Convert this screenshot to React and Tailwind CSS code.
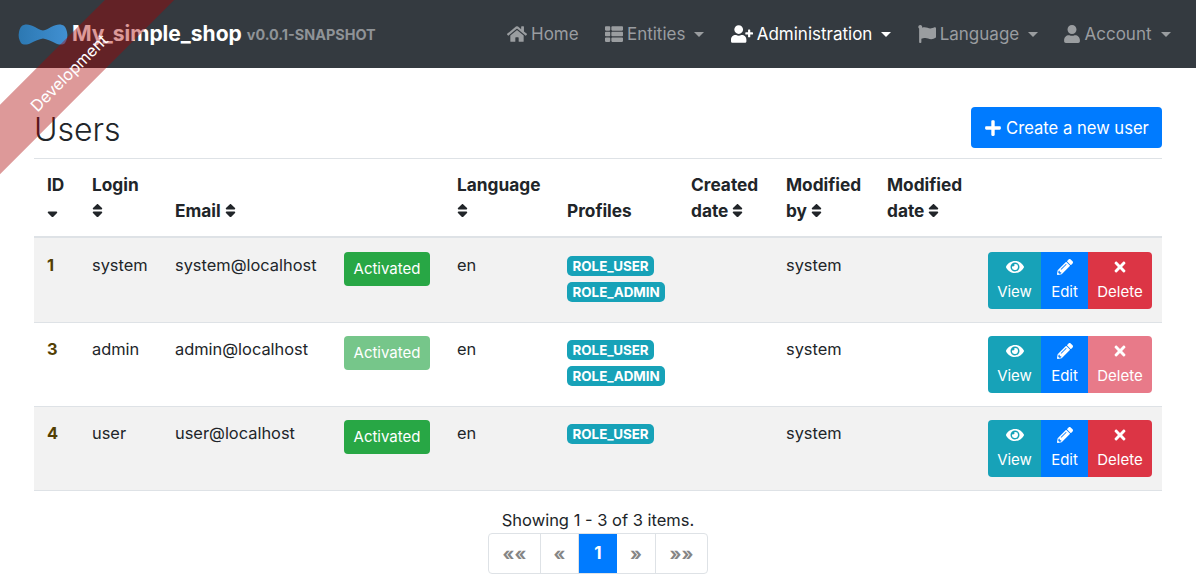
import { FaHome, FaThList, FaUserPlus, FaFlag, FaUser, FaPlus, FaEye, FaPencilAlt, FaTimes, FaSort, FaSortDown } from 'react-icons/fa';

const NAV_ITEMS = [
  { label: 'Home', icon: FaHome, size: 'w-5 h-[18px]', caret: false },
  { label: 'Entities', icon: FaThList, size: 'w-[18px] h-[18px]', caret: true },
  { label: 'Administration', icon: FaUserPlus, size: 'w-[22px] h-[18px]', caret: true, active: true },
  { label: 'Language', icon: FaFlag, size: 'w-[18px] h-[18px]', caret: true },
  { label: 'Account', icon: FaUser, size: 'w-4 h-[18px]', caret: true },
];

const USERS = [
  { id: 1, login: 'system', email: 'system@localhost', roles: ['ROLE_USER', 'ROLE_ADMIN'], self: false },
  { id: 3, login: 'admin', email: 'admin@localhost', roles: ['ROLE_USER', 'ROLE_ADMIN'], self: true },
  { id: 4, login: 'user', email: 'user@localhost', roles: ['ROLE_USER'], self: false },
];

function Caret({ className }) {
  return <span className={`inline-block w-0 h-0 border-x-[5.5px] border-x-transparent border-t-[5.5px] ${className}`} />;
}

function Navbar() {
  return (
    <nav className="h-[68px] bg-[#343a40] flex items-center justify-between pl-[18px] pr-[25.5px]">
      <div className="flex items-center">
        <svg width="50" height="21" viewBox="0 0 50 21" className="mr-1">
          <defs>
            <linearGradient id="tie" x1="0" x2="1" y1="0" y2="0">
              <stop offset="0" stopColor="#2c78b2" />
              <stop offset="1" stopColor="#4190d2" />
            </linearGradient>
          </defs>
          <path d="M6 1 C9 0 13 1 17 3 C20 5 22 6 25 6.5 C28 6 30 5 33 3 C37 1 41 0 44 1 C47 1.5 48 4 49 8 C50 12 49 16 47 19 C45 21 41 21 37 19 C33 17 29 15 25 14.5 C21 15 17 17 13 19 C9 21 5 21 3 19 C1 16 0 12 1 8 C2 4 3 1.5 6 1 Z" fill="url(#tie)" />
        </svg>
        <span className="text-[21px] font-bold text-white">My_simple_shop</span>
        <span className="text-[14.4px] font-bold text-[#8f9397] ml-[5px] mt-[2px]">v0.0.1-SNAPSHOT</span>
      </div>
      <div className="flex items-center gap-[26.25px]">
        {NAV_ITEMS.map((item) => {
          const Icon = item.icon;
          return (
            <div key={item.label} className={`flex items-center text-[17px] ${item.active ? 'text-white' : 'text-[#9a9da0]'}`}>
              <Icon className={`mr-[4px] ${item.size}`} />
              <span className="mt-px">{item.label}</span>
              {item.caret && <Caret className={`ml-[9px] ${item.active ? 'border-t-white' : 'border-t-[#9a9da0]'}`} />}
            </div>
          );
        })}
      </div>
    </nav>
  );
}

function SortHead({ children, down }) {
  const Icon = down ? FaSortDown : FaSort;
  return (
    <>
      {children} <Icon className="inline-block -ml-[3px] text-[17px] align-[-2px]" />
    </>
  );
}

function ActionButtons({ self }) {
  const cell = 'flex flex-col items-center justify-center pt-px text-white text-[15px] leading-[22px]';
  return (
    <div className="flex justify-end">
      <div className="flex h-[57px] rounded-[4px] overflow-hidden">
        <div className={`${cell} w-[53px] bg-[#17a2b8]`}>
          <FaEye className="w-[18px] h-4 mb-[6px]" />
          <span>View</span>
        </div>
        <div className={`${cell} w-[47px] bg-[#007bff]`}>
          <FaPencilAlt className="w-4 h-4 mb-[6px]" />
          <span>Edit</span>
        </div>
        <div className={`${cell} w-[64px] ${self ? 'bg-[#e87a89]' : 'bg-[#dc3545]'}`}>
          <FaTimes className="w-4 h-4 mb-[6px]" />
          <span>Delete</span>
        </div>
      </div>
    </div>
  );
}

function UsersTable() {
  const th = 'px-3 pt-[13px] pb-[12px] text-left align-bottom font-bold text-[17.3px] leading-[26px] border-b-[2px] border-[#dee2e6]';
  return (
    <table className="w-full table-fixed border-separate border-spacing-0 border-t border-[#dee2e6] text-[#212529] text-[16.4px]">
      <colgroup>
        <col className="w-[46px]" />
        <col className="w-[83px]" />
        <col className="w-[169px]" />
        <col className="w-[113px]" />
        <col className="w-[110px]" />
        <col className="w-[124px]" />
        <col className="w-[95px]" />
        <col className="w-[101px]" />
        <col className="w-[101px]" />
        <col />
      </colgroup>
      <thead>
        <tr>
          <th className={`${th} pl-[13px] pr-0`}><SortHead down>ID</SortHead></th>
          <th className={th}><SortHead>Login</SortHead></th>
          <th className={th}><SortHead>Email</SortHead></th>
          <th className={th}></th>
          <th className={`${th} pr-0`}><SortHead>Language</SortHead></th>
          <th className={th}>Profiles</th>
          <th className={`${th} pr-0`}><SortHead>Created date</SortHead></th>
          <th className={`${th} pr-0`}><SortHead>Modified by</SortHead></th>
          <th className={`${th} pr-0`}><SortHead>Modified date</SortHead></th>
          <th className={th}></th>
        </tr>
      </thead>
      <tbody>
        {USERS.map((user, i) => {
          const line = `border-t ${i === 0 ? 'border-t-transparent' : 'border-t-[#dee2e6]'} ${i === USERS.length - 1 ? 'border-b border-b-[#dee2e6]' : ''}`;
          const td = `${line} px-3 pt-[14px] pb-[13px] align-top leading-6`;
          return (
            <tr key={user.id} className={i % 2 === 0 ? 'bg-[#f2f2f2]' : ''}>
              <td className={`${td} pl-[13px] font-bold text-[#533f03]`}>{user.id}</td>
              <td className={td}>{user.login}</td>
              <td className={`${td} whitespace-nowrap`}>{user.email}</td>
              <td className={`${line} px-3 pt-[13px] align-top`}>
                <span className={`flex items-center justify-center w-[86px] h-[34px] rounded-[4px] text-white text-[15px] ${user.self ? 'bg-[#76c68a]' : 'bg-[#28a745]'}`}>
                  Activated
                </span>
              </td>
              <td className={td}>en</td>
              <td className={`${line} pl-3 pr-0 pt-[17px] align-top`}>
                <div className="flex flex-col items-start gap-[6px]">
                  {user.roles.map((role) => (
                    <span key={role} className="h-5 px-[5.5px] rounded-[5px] bg-[#17a2b8] text-white text-[13.4px] font-bold leading-5">
                      {role}
                    </span>
                  ))}
                </div>
              </td>
              <td className={td}></td>
              <td className={td}>system</td>
              <td className={td}></td>
              <td className={`${line} pr-[10px] pt-[13px] pb-[13px] align-top`}>
                <ActionButtons self={user.self} />
              </td>
            </tr>
          );
        })}
      </tbody>
    </table>
  );
}

function Pagination() {
  const cell = 'flex items-center justify-center h-full text-[#858585] text-[18px] font-bold border-r border-[#dee2e6]';
  return (
    <div className="flex flex-col items-center mt-[17px]">
      <div className="text-[16.5px] leading-6 text-[#212529]">Showing 1 - 3 of 3 items.</div>
      <div className="flex h-[41px] w-[220px] mt-px border border-[#dee2e6] rounded-[4px] overflow-hidden">
        <div className={`${cell} w-[52px]`}>««</div>
        <div className={`${cell} w-[38px]`}>«</div>
        <div className="flex items-center justify-center h-full w-[38px] bg-[#007bff] text-white text-[17px] font-bold">1</div>
        <div className={`${cell} w-[39px]`}>»</div>
        <div className={`${cell} flex-1 border-r-0`}>»»</div>
      </div>
    </div>
  );
}

export default function App() {
  return (
    <div className="relative w-[1196px] h-[582px] overflow-hidden bg-white font-[Inter,sans-serif]">
      <Navbar />
      <main className="px-[34px]">
        <div className="flex items-start justify-between h-[90px] pt-[39px]">
          <h2 className="text-[32px] font-light leading-[44px] mt-px text-[#212529]">Users</h2>
          <button className="flex items-center h-[41px] w-[191px] justify-center pt-px rounded-[4px] bg-[#007bff] text-white text-[16.6px]">
            <FaPlus className="mr-[4px] text-[18px]" />
            Create a new user
          </button>
        </div>
        <UsersTable />
        <Pagination />
      </main>
      {/* dev ribbon */}
      <div className="absolute left-[-80px] top-[45px] w-[300px] h-[49px] -rotate-45 bg-[#aa0000]/40 flex items-center justify-center text-white text-[16.2px]">
        <span className="mt-[4px] mr-[6px]">Development</span>
      </div>
    </div>
  );
}
